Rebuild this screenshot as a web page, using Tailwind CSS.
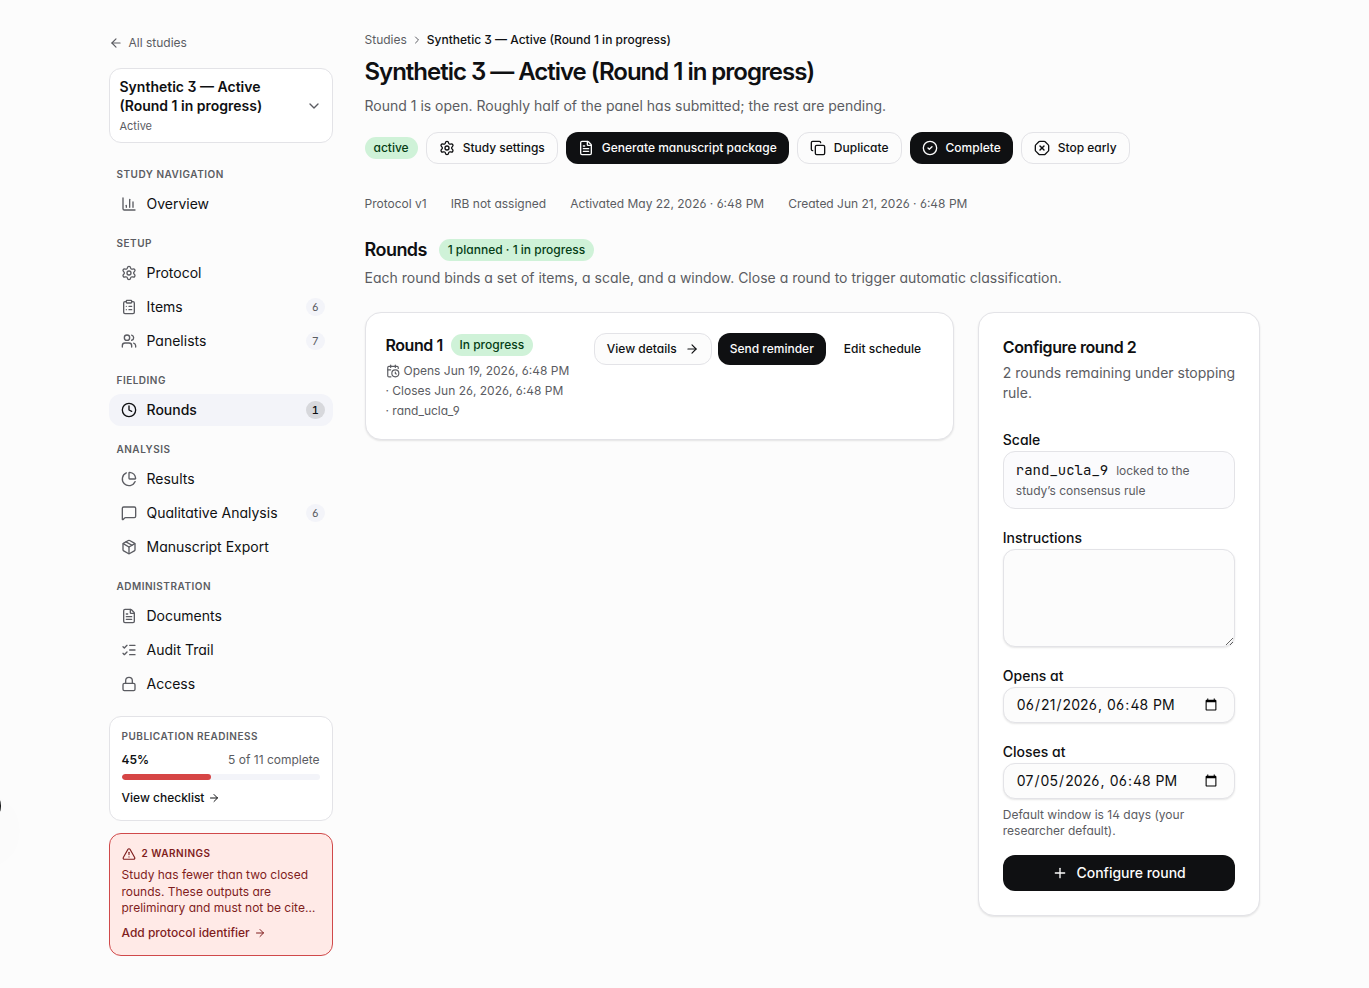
<!DOCTYPE html>
<html lang="en">
<head>
    <meta charset="UTF-8">
    <meta name="viewport" content="width=device-width, initial-scale=1.0">
    <title>Rounds - Synthetic 3</title>
    <script src="https://cdn.jsdelivr.net/npm/@tailwindcss/browser@4"></script>
</head>
<body class="h-screen overflow-hidden bg-[#fcfcfc] font-['Inter',sans-serif] text-[#0f1012] antialiased [font-feature-settings:'cv11','ss01']">
    <!-- Icons -->
    <svg class="hidden">
        <symbol id="arrow-left" viewBox="0 0 24 24"><path d="m12 19-7-7 7-7"/><path d="M19 12H5"/></symbol>
        <symbol id="arrow-right" viewBox="0 0 24 24"><path d="M5 12h14"/><path d="m12 5 7 7-7 7"/></symbol>
        <symbol id="chevron-down" viewBox="0 0 24 24"><path d="m6 9 6 6 6-6"/></symbol>
        <symbol id="chevron-right" viewBox="0 0 24 24"><path d="m9 18 6-6-6-6"/></symbol>
        <symbol id="chart" viewBox="0 0 24 24"><path d="M3 3v16a2 2 0 0 0 2 2h16"/><path d="M18 17V9"/><path d="M13 17V5"/><path d="M8 17v-3"/></symbol>
        <symbol id="gear" viewBox="0 0 24 24"><path d="M9.671 4.136a2.34 2.34 0 0 1 4.659 0 2.34 2.34 0 0 0 3.319 1.915 2.34 2.34 0 0 1 2.33 4.033 2.34 2.34 0 0 0 0 3.831 2.34 2.34 0 0 1-2.33 4.033 2.34 2.34 0 0 0-3.319 1.915 2.34 2.34 0 0 1-4.659 0 2.34 2.34 0 0 0-3.32-1.915 2.34 2.34 0 0 1-2.33-4.033 2.34 2.34 0 0 0 0-3.831A2.34 2.34 0 0 1 6.35 6.051a2.34 2.34 0 0 0 3.319-1.915"/><circle cx="12" cy="12" r="3"/></symbol>
        <symbol id="clipboard" viewBox="0 0 24 24"><rect width="8" height="4" x="8" y="2" rx="1"/><path d="M16 4h2a2 2 0 0 1 2 2v14a2 2 0 0 1-2 2H6a2 2 0 0 1-2-2V6a2 2 0 0 1 2-2h2"/><path d="M12 11h4"/><path d="M12 16h4"/><path d="M8 11h.01"/><path d="M8 16h.01"/></symbol>
        <symbol id="users" viewBox="0 0 24 24"><path d="M16 21v-2a4 4 0 0 0-4-4H6a4 4 0 0 0-4 4v2"/><path d="M16 3.128a4 4 0 0 1 0 7.744"/><path d="M22 21v-2a4 4 0 0 0-3-3.87"/><circle cx="9" cy="7" r="4"/></symbol>
        <symbol id="clock" viewBox="0 0 24 24"><circle cx="12" cy="12" r="10"/><path d="M12 6v6l4 2"/></symbol>
        <symbol id="pie" viewBox="0 0 24 24"><path d="M21 12c.552 0 1.005-.449.95-.998a10 10 0 0 0-8.953-8.951c-.55-.055-.998.398-.998.95v8a1 1 0 0 0 1 1z"/><path d="M21.21 15.89A10 10 0 1 1 8 2.83"/></symbol>
        <symbol id="message" viewBox="0 0 24 24"><path d="M22 17a2 2 0 0 1-2 2H6.828a2 2 0 0 0-1.414.586l-2.202 2.202A.71.71 0 0 1 2 21.286V5a2 2 0 0 1 2-2h16a2 2 0 0 1 2 2z"/></symbol>
        <symbol id="package" viewBox="0 0 24 24"><path d="M11 21.73a2 2 0 0 0 2 0l7-4A2 2 0 0 0 21 16V8a2 2 0 0 0-1-1.73l-7-4a2 2 0 0 0-2 0l-7 4A2 2 0 0 0 3 8v8a2 2 0 0 0 1 1.73z"/><path d="M12 22V12"/><path d="M3.29 7 12 12l8.71-5"/><path d="m7.5 4.27 9 5.15"/></symbol>
        <symbol id="file" viewBox="0 0 24 24"><path d="M6 22a2 2 0 0 1-2-2V4a2 2 0 0 1 2-2h8a2.4 2.4 0 0 1 1.704.706l3.588 3.588A2.4 2.4 0 0 1 20 8v12a2 2 0 0 1-2 2z"/><path d="M14 2v5a1 1 0 0 0 1 1h5"/><path d="M10 9H8"/><path d="M16 13H8"/><path d="M16 17H8"/></symbol>
        <symbol id="checks" viewBox="0 0 24 24"><path d="M13 5h8"/><path d="M13 12h8"/><path d="M13 19h8"/><path d="m3 17 2 2 4-4"/><path d="m3 7 2 2 4-4"/></symbol>
        <symbol id="lock" viewBox="0 0 24 24"><rect width="18" height="11" x="3" y="11" rx="2"/><path d="M7 11V7a5 5 0 0 1 10 0v4"/></symbol>
        <symbol id="warning" viewBox="0 0 24 24"><path d="m21.73 18-8-14a2 2 0 0 0-3.48 0l-8 14A2 2 0 0 0 4 21h16a2 2 0 0 0 1.73-3"/><path d="M12 9v4"/><path d="M12 17h.01"/></symbol>
        <symbol id="copy" viewBox="0 0 24 24"><rect width="14" height="14" x="8" y="8" rx="2"/><path d="M4 16c-1.1 0-2-.9-2-2V4c0-1.1.9-2 2-2h10c1.1 0 2 .9 2 2"/></symbol>
        <symbol id="circle-check" viewBox="0 0 24 24"><circle cx="12" cy="12" r="10"/><path d="m9 12 2 2 4-4"/></symbol>
        <symbol id="stop" viewBox="0 0 24 24"><path d="m15 9-6 6"/><path d="M2.586 16.726A2 2 0 0 1 2 15.312V8.688a2 2 0 0 1 .586-1.414l4.688-4.688A2 2 0 0 1 8.688 2h6.624a2 2 0 0 1 1.414.586l4.688 4.688A2 2 0 0 1 22 8.688v6.624a2 2 0 0 1-.586 1.414l-4.688 4.688a2 2 0 0 1-1.414.586H8.688a2 2 0 0 1-1.414-.586z"/><path d="m9 9 6 6"/></symbol>
        <symbol id="calendar-clock" viewBox="0 0 24 24"><path d="M16 14v2.2l1.6 1"/><path d="M16 2v4"/><path d="M21 7.5V6a2 2 0 0 0-2-2H5a2 2 0 0 0-2 2v14a2 2 0 0 0 2 2h3.5"/><path d="M3 10h5"/><path d="M8 2v4"/><circle cx="16" cy="16" r="6"/></symbol>
        <symbol id="plus" viewBox="0 0 24 24"><path d="M5 12h14"/><path d="M12 5v14"/></symbol>
    </svg>

    <!-- Floating button tucked behind the left edge -->
    <div class="fixed top-[788px] -left-[35px] size-9 rounded-full bg-[#0f1012] shadow-2xl"></div>

    <div class="mx-auto flex max-w-6xl gap-8 pt-8">
        <!-- Sidebar -->
        <aside class="w-56 shrink-0">
            <a href="#" class="flex h-[22px] items-center gap-1.5 text-xs text-[#5b5c62]">
                <svg class="size-3.5 fill-none stroke-current stroke-2 [stroke-linecap:round] [stroke-linejoin:round]"><use href="#arrow-left"/></svg>
                All studies
            </a>

            <button class="mt-3.5 flex w-full items-center justify-between rounded-xl border border-[#e3e3e7] bg-white px-2.5 py-2 text-left">
                <span>
                    <span class="block text-sm leading-[19.25px] font-semibold">Synthetic 3 — Active<br>(Round 1 in progress)</span>
                    <span class="mt-0.5 block text-[11px] leading-[16.5px] text-[#5b5c62]">Active</span>
                </span>
                <svg class="size-4 fill-none stroke-[#5b5c62] stroke-2 [stroke-linecap:round] [stroke-linejoin:round]"><use href="#chevron-down"/></svg>
            </button>

            <nav class="mt-6 flex flex-col gap-4 text-sm">
                <div>
                    <h3 class="mb-1.5 px-2 text-[10px] leading-[15px] font-semibold tracking-wider text-[#5b5c62] uppercase">Study navigation</h3>
                    <a href="#" class="flex h-8 items-center gap-2.5 px-3">
                        <svg class="size-4 fill-none stroke-[#5b5c62] stroke-2 [stroke-linecap:round] [stroke-linejoin:round]"><use href="#chart"/></svg>
                        Overview
                    </a>
                </div>
                <div>
                    <h3 class="mb-1.5 px-2 text-[10px] leading-[15px] font-semibold tracking-wider text-[#5b5c62] uppercase">Setup</h3>
                    <div class="flex flex-col gap-0.5">
                        <a href="#" class="flex h-8 items-center gap-2.5 px-3">
                            <svg class="size-4 fill-none stroke-[#5b5c62] stroke-2 [stroke-linecap:round] [stroke-linejoin:round]"><use href="#gear"/></svg>
                            Protocol
                        </a>
                        <a href="#" class="flex h-8 items-center gap-2.5 pr-2 pl-3">
                            <svg class="size-4 fill-none stroke-[#5b5c62] stroke-2 [stroke-linecap:round] [stroke-linejoin:round]"><use href="#clipboard"/></svg>
                            Items
                            <span class="ml-auto rounded-full bg-[#f3f4f9] px-[5.6px] py-px text-[11px] leading-4 text-[#5b5c62] tabular-nums">6</span>
                        </a>
                        <a href="#" class="flex h-8 items-center gap-2.5 pr-2 pl-3">
                            <svg class="size-4 fill-none stroke-[#5b5c62] stroke-2 [stroke-linecap:round] [stroke-linejoin:round]"><use href="#users"/></svg>
                            Panelists
                            <span class="ml-auto rounded-full bg-[#f3f4f9] px-[5.6px] py-px text-[11px] leading-4 text-[#5b5c62] tabular-nums">7</span>
                        </a>
                    </div>
                </div>
                <div>
                    <h3 class="mb-1.5 px-2 text-[10px] leading-[15px] font-semibold tracking-wider text-[#5b5c62] uppercase">Fielding</h3>
                    <a href="#" class="flex h-8 items-center gap-2.5 rounded-xl bg-[#f3f4f9] pr-2 pl-3 font-medium">
                        <svg class="size-4 fill-none stroke-current stroke-2 [stroke-linecap:round] [stroke-linejoin:round]"><use href="#clock"/></svg>
                        Rounds
                        <span class="ml-auto rounded-full bg-[#d7d8dc] px-[5.5px] py-px text-[11px] leading-4 tabular-nums">1</span>
                    </a>
                </div>
                <div>
                    <h3 class="mb-1.5 px-2 text-[10px] leading-[15px] font-semibold tracking-wider text-[#5b5c62] uppercase">Analysis</h3>
                    <div class="flex flex-col gap-0.5">
                        <a href="#" class="flex h-8 items-center gap-2.5 px-3">
                            <svg class="size-4 fill-none stroke-[#5b5c62] stroke-2 [stroke-linecap:round] [stroke-linejoin:round]"><use href="#pie"/></svg>
                            Results
                        </a>
                        <a href="#" class="flex h-8 items-center gap-2.5 pr-2 pl-3">
                            <svg class="size-4 fill-none stroke-[#5b5c62] stroke-2 [stroke-linecap:round] [stroke-linejoin:round]"><use href="#message"/></svg>
                            Qualitative Analysis
                            <span class="ml-auto rounded-full bg-[#f3f4f9] px-[5.6px] py-px text-[11px] leading-4 text-[#5b5c62] tabular-nums">6</span>
                        </a>
                        <a href="#" class="flex h-8 items-center gap-2.5 px-3">
                            <svg class="size-4 fill-none stroke-[#5b5c62] stroke-2 [stroke-linecap:round] [stroke-linejoin:round]"><use href="#package"/></svg>
                            Manuscript Export
                        </a>
                    </div>
                </div>
                <div>
                    <h3 class="mb-1.5 px-2 text-[10px] leading-[15px] font-semibold tracking-wider text-[#5b5c62] uppercase">Administration</h3>
                    <div class="flex flex-col gap-0.5">
                        <a href="#" class="flex h-8 items-center gap-2.5 px-3">
                            <svg class="size-4 fill-none stroke-[#5b5c62] stroke-2 [stroke-linecap:round] [stroke-linejoin:round]"><use href="#file"/></svg>
                            Documents
                        </a>
                        <a href="#" class="flex h-8 items-center gap-2.5 px-3">
                            <svg class="size-4 fill-none stroke-[#5b5c62] stroke-2 [stroke-linecap:round] [stroke-linejoin:round]"><use href="#checks"/></svg>
                            Audit Trail
                        </a>
                        <a href="#" class="flex h-8 items-center gap-2.5 px-3">
                            <svg class="size-4 fill-none stroke-[#5b5c62] stroke-2 [stroke-linecap:round] [stroke-linejoin:round]"><use href="#lock"/></svg>
                            Access
                        </a>
                    </div>
                </div>
            </nav>

            <!-- Publication readiness -->
            <div class="mt-4 rounded-xl border border-[#e3e3e7] bg-white p-3 text-xs">
                <h3 class="text-[10px] leading-[15px] font-semibold tracking-wider text-[#5b5c62] uppercase">Publication readiness</h3>
                <div class="mt-2 flex justify-between">
                    <span class="font-semibold">45%</span>
                    <span class="text-[#5b5c62]">5 of 11 complete</span>
                </div>
                <div class="mt-1.5 h-1.5 overflow-hidden rounded-full bg-[#f3f4f9]">
                    <div class="h-full rounded-full bg-[#d64545]" style="width: 45%"></div>
                </div>
                <a href="#" class="mt-2 flex h-5 items-center gap-1 font-medium">
                    View checklist
                    <svg class="size-3 fill-none stroke-current stroke-2 [stroke-linecap:round] [stroke-linejoin:round]"><use href="#arrow-right"/></svg>
                </a>
            </div>

            <!-- Warnings -->
            <div class="mt-3 rounded-xl border border-[#d0494a] bg-[#ffeae7] p-3 text-xs text-[#7f1d1d]">
                <h3 class="flex h-[15px] items-center gap-1.5 text-[10px] font-semibold tracking-wider uppercase">
                    <svg class="size-3.5 fill-none stroke-current stroke-2 [stroke-linecap:round] [stroke-linejoin:round]"><use href="#warning"/></svg>
                    2 warnings
                </h3>
                <p class="mt-1.5 leading-[16.5px]">Study has fewer than two closed<br>rounds. These outputs are<br>preliminary and must not be cite…</p>
                <a href="#" class="mt-1.5 flex h-5 items-center gap-1 font-medium">
                    Add protocol identifier
                    <svg class="size-3 fill-none stroke-current stroke-2 [stroke-linecap:round] [stroke-linejoin:round]"><use href="#arrow-right"/></svg>
                </a>
            </div>
        </aside>

        <!-- Main content -->
        <main class="min-w-0 flex-1">
            <div class="flex items-center gap-1 text-xs">
                <span class="text-[#5b5c62]">Studies</span>
                <svg class="size-3 fill-none stroke-[#5b5c62] stroke-2 [stroke-linecap:round] [stroke-linejoin:round]"><use href="#chevron-right"/></svg>
                <span class="font-medium">Synthetic 3 — Active (Round 1 in progress)</span>
            </div>
            <h1 class="mt-2 text-2xl leading-8 font-semibold tracking-[-0.0425em]">Synthetic 3 — Active (Round 1 in progress)</h1>
            <p class="mt-2 text-sm text-[#5b5c62]">Round 1 is open. Roughly half of the panel has submitted; the rest are pending.</p>

            <div class="mt-4 flex items-center gap-2 text-xs font-medium">
                <span class="rounded-full bg-[#cff2d8] px-[9px] py-[3px] text-[#053d15]">active</span>
                <button class="flex h-8 items-center gap-2 rounded-xl border border-[#e3e3e7] px-3">
                    <svg class="size-4 fill-none stroke-current stroke-2 [stroke-linecap:round] [stroke-linejoin:round]"><use href="#gear"/></svg>
                    Study settings
                </button>
                <button class="flex h-8 items-center gap-2 rounded-xl bg-[#0f1012] px-3 text-[#fcfcfc]">
                    <svg class="size-4 fill-none stroke-current stroke-2 [stroke-linecap:round] [stroke-linejoin:round]"><use href="#file"/></svg>
                    Generate manuscript package
                </button>
                <button class="flex h-8 items-center gap-2 rounded-xl border border-[#e3e3e7] px-[12.15px]">
                    <svg class="size-4 fill-none stroke-current stroke-2 [stroke-linecap:round] [stroke-linejoin:round]"><use href="#copy"/></svg>
                    Duplicate
                </button>
                <button class="flex h-8 items-center gap-2 rounded-xl bg-[#0f1012] px-[11.9px] text-[#fcfcfc]">
                    <svg class="size-4 fill-none stroke-current stroke-2 [stroke-linecap:round] [stroke-linejoin:round]"><use href="#circle-check"/></svg>
                    Complete
                </button>
                <button class="flex h-8 items-center gap-2 rounded-xl border border-[#e3e3e7] px-3">
                    <svg class="size-4 fill-none stroke-current stroke-2 [stroke-linecap:round] [stroke-linejoin:round]"><use href="#stop"/></svg>
                    Stop early
                </button>
            </div>

            <div class="mt-8 flex gap-6 text-xs text-[#5b5c62]">
                <span>Protocol v1</span>
                <span>IRB not assigned</span>
                <span>Activated May 22, 2026 · 6:48 PM</span>
                <span>Created Jun 21, 2026 · 6:48 PM</span>
            </div>

            <div class="mt-6 flex h-7 items-center gap-3">
                <h2 class="text-lg font-semibold tracking-[-0.03em]">Rounds</h2>
                <span class="rounded-full bg-[#cff2d8] px-[8.8px] py-[3px] text-xs font-medium text-[#053d15]">1 planned · 1 in progress</span>
            </div>
            <p class="mt-1 text-sm text-[#5b5c62]">Each round binds a set of items, a scale, and a window. Close a round to trigger automatic classification.</p>

            <div class="mt-6 grid grid-cols-[589.3px_282.6px] items-start gap-6">
                <!-- Round 1 -->
                <section class="flex h-32 gap-6 rounded-2xl border border-[#e3e3e7] bg-white p-5 shadow-[0_1px_2px_0_rgb(0_0_0/0.1)]">
                    <div class="w-[184.3px] shrink-0">
                        <div class="flex h-6 items-center gap-2">
                            <h3 class="font-semibold tracking-[-0.028em]">Round 1</h3>
                            <span class="rounded-full bg-[#cff2d8] px-[8.8px] py-[3px] text-xs font-medium text-[#053d15]">In progress</span>
                        </div>
                        <div class="mt-1 text-xs leading-5 text-[#5b5c62]">
                            <div class="flex items-center gap-1">
                                <svg class="size-3.5 fill-none stroke-current stroke-2 [stroke-linecap:round] [stroke-linejoin:round]"><use href="#calendar-clock"/></svg>
                                Opens Jun 19, 2026, 6:48 PM
                            </div>
                            <div>· Closes Jun 26, 2026, 6:48 PM</div>
                            <div>· rand_ucla_9</div>
                        </div>
                    </div>
                    <div class="flex shrink-0 items-start gap-1.5 text-xs font-medium whitespace-nowrap">
                        <button class="flex h-8 items-center gap-2 rounded-xl border border-[#e3e3e7] bg-[#fcfcfc] px-3">
                            View details
                            <svg class="size-3.5 fill-none stroke-current stroke-2 [stroke-linecap:round] [stroke-linejoin:round]"><use href="#arrow-right"/></svg>
                        </button>
                        <button class="h-8 rounded-xl bg-[#0f1012] px-3 text-[#fcfcfc]">Send reminder</button>
                        <button class="h-8 px-3">Edit schedule</button>
                    </div>
                </section>

                <!-- Configure round form -->
                <section class="h-[604px] rounded-2xl border border-[#e3e3e7] bg-white p-6 shadow-[0_1px_2px_0_rgb(0_0_0/0.1)]">
                    <h3 class="leading-5 font-semibold tracking-tight">Configure round 2</h3>
                    <p class="mt-1.5 text-sm text-[#5b5c62]">2 rounds remaining under stopping rule.</p>

                    <form class="mt-[30px] flex flex-col gap-[22px] text-sm">
                        <div>
                            <label class="mb-1 block leading-none font-medium">Scale</label>
                            <div class="rounded-xl border border-[#e3e3e7] bg-[#fbfbfd] px-3 py-2 leading-5">
                                <span class="font-['JetBrains_Mono','DejaVu_Sans_Mono',monospace] leading-none">rand_ucla_9</span>
                                <span class="ml-1 text-xs leading-4 text-[#5b5c62]">locked to the study’s consensus rule</span>
                            </div>
                        </div>
                        <div>
                            <label for="instructions" class="mb-1 block leading-none font-medium">Instructions</label>
                            <textarea id="instructions" class="block h-[98px] w-full rounded-xl border border-[#e3e3e7] bg-[#fcfcfc] shadow-[0_1px_2px_0_rgb(0_0_0/0.1)]"></textarea>
                        </div>
                        <div>
                            <label for="opens" class="mb-1 block leading-none font-medium">Opens at</label>
                            <input id="opens" type="datetime-local" value="2026-06-21T18:48" class="block h-9 w-full rounded-xl border border-[#e3e3e7] bg-[#fcfcfc] py-1 pr-3.5 pl-3 tracking-[0.08px] shadow-[0_1px_2px_0_rgb(0_0_0/0.1)]">
                        </div>
                        <div>
                            <label for="closes" class="mb-1 block leading-none font-medium">Closes at</label>
                            <input id="closes" type="datetime-local" value="2026-07-05T18:48" class="block h-9 w-full rounded-xl border border-[#e3e3e7] bg-[#fcfcfc] py-1 pr-3.5 pl-3 tracking-[0.08px] shadow-[0_1px_2px_0_rgb(0_0_0/0.1)]">
                            <p class="mt-2 text-xs text-[#5b5c62]">Default window is 14 days (your researcher default).</p>
                            <button type="button" class="mt-4 flex h-9 w-full items-center justify-center gap-2 rounded-xl bg-[#0f1012] font-medium text-[#fcfcfc]">
                                <svg class="size-4 fill-none stroke-current stroke-2 [stroke-linecap:round] [stroke-linejoin:round]"><use href="#plus"/></svg>
                                Configure round
                            </button>
                        </div>
                    </form>
                </section>
            </div>
        </main>
    </div>
</body>
</html>
